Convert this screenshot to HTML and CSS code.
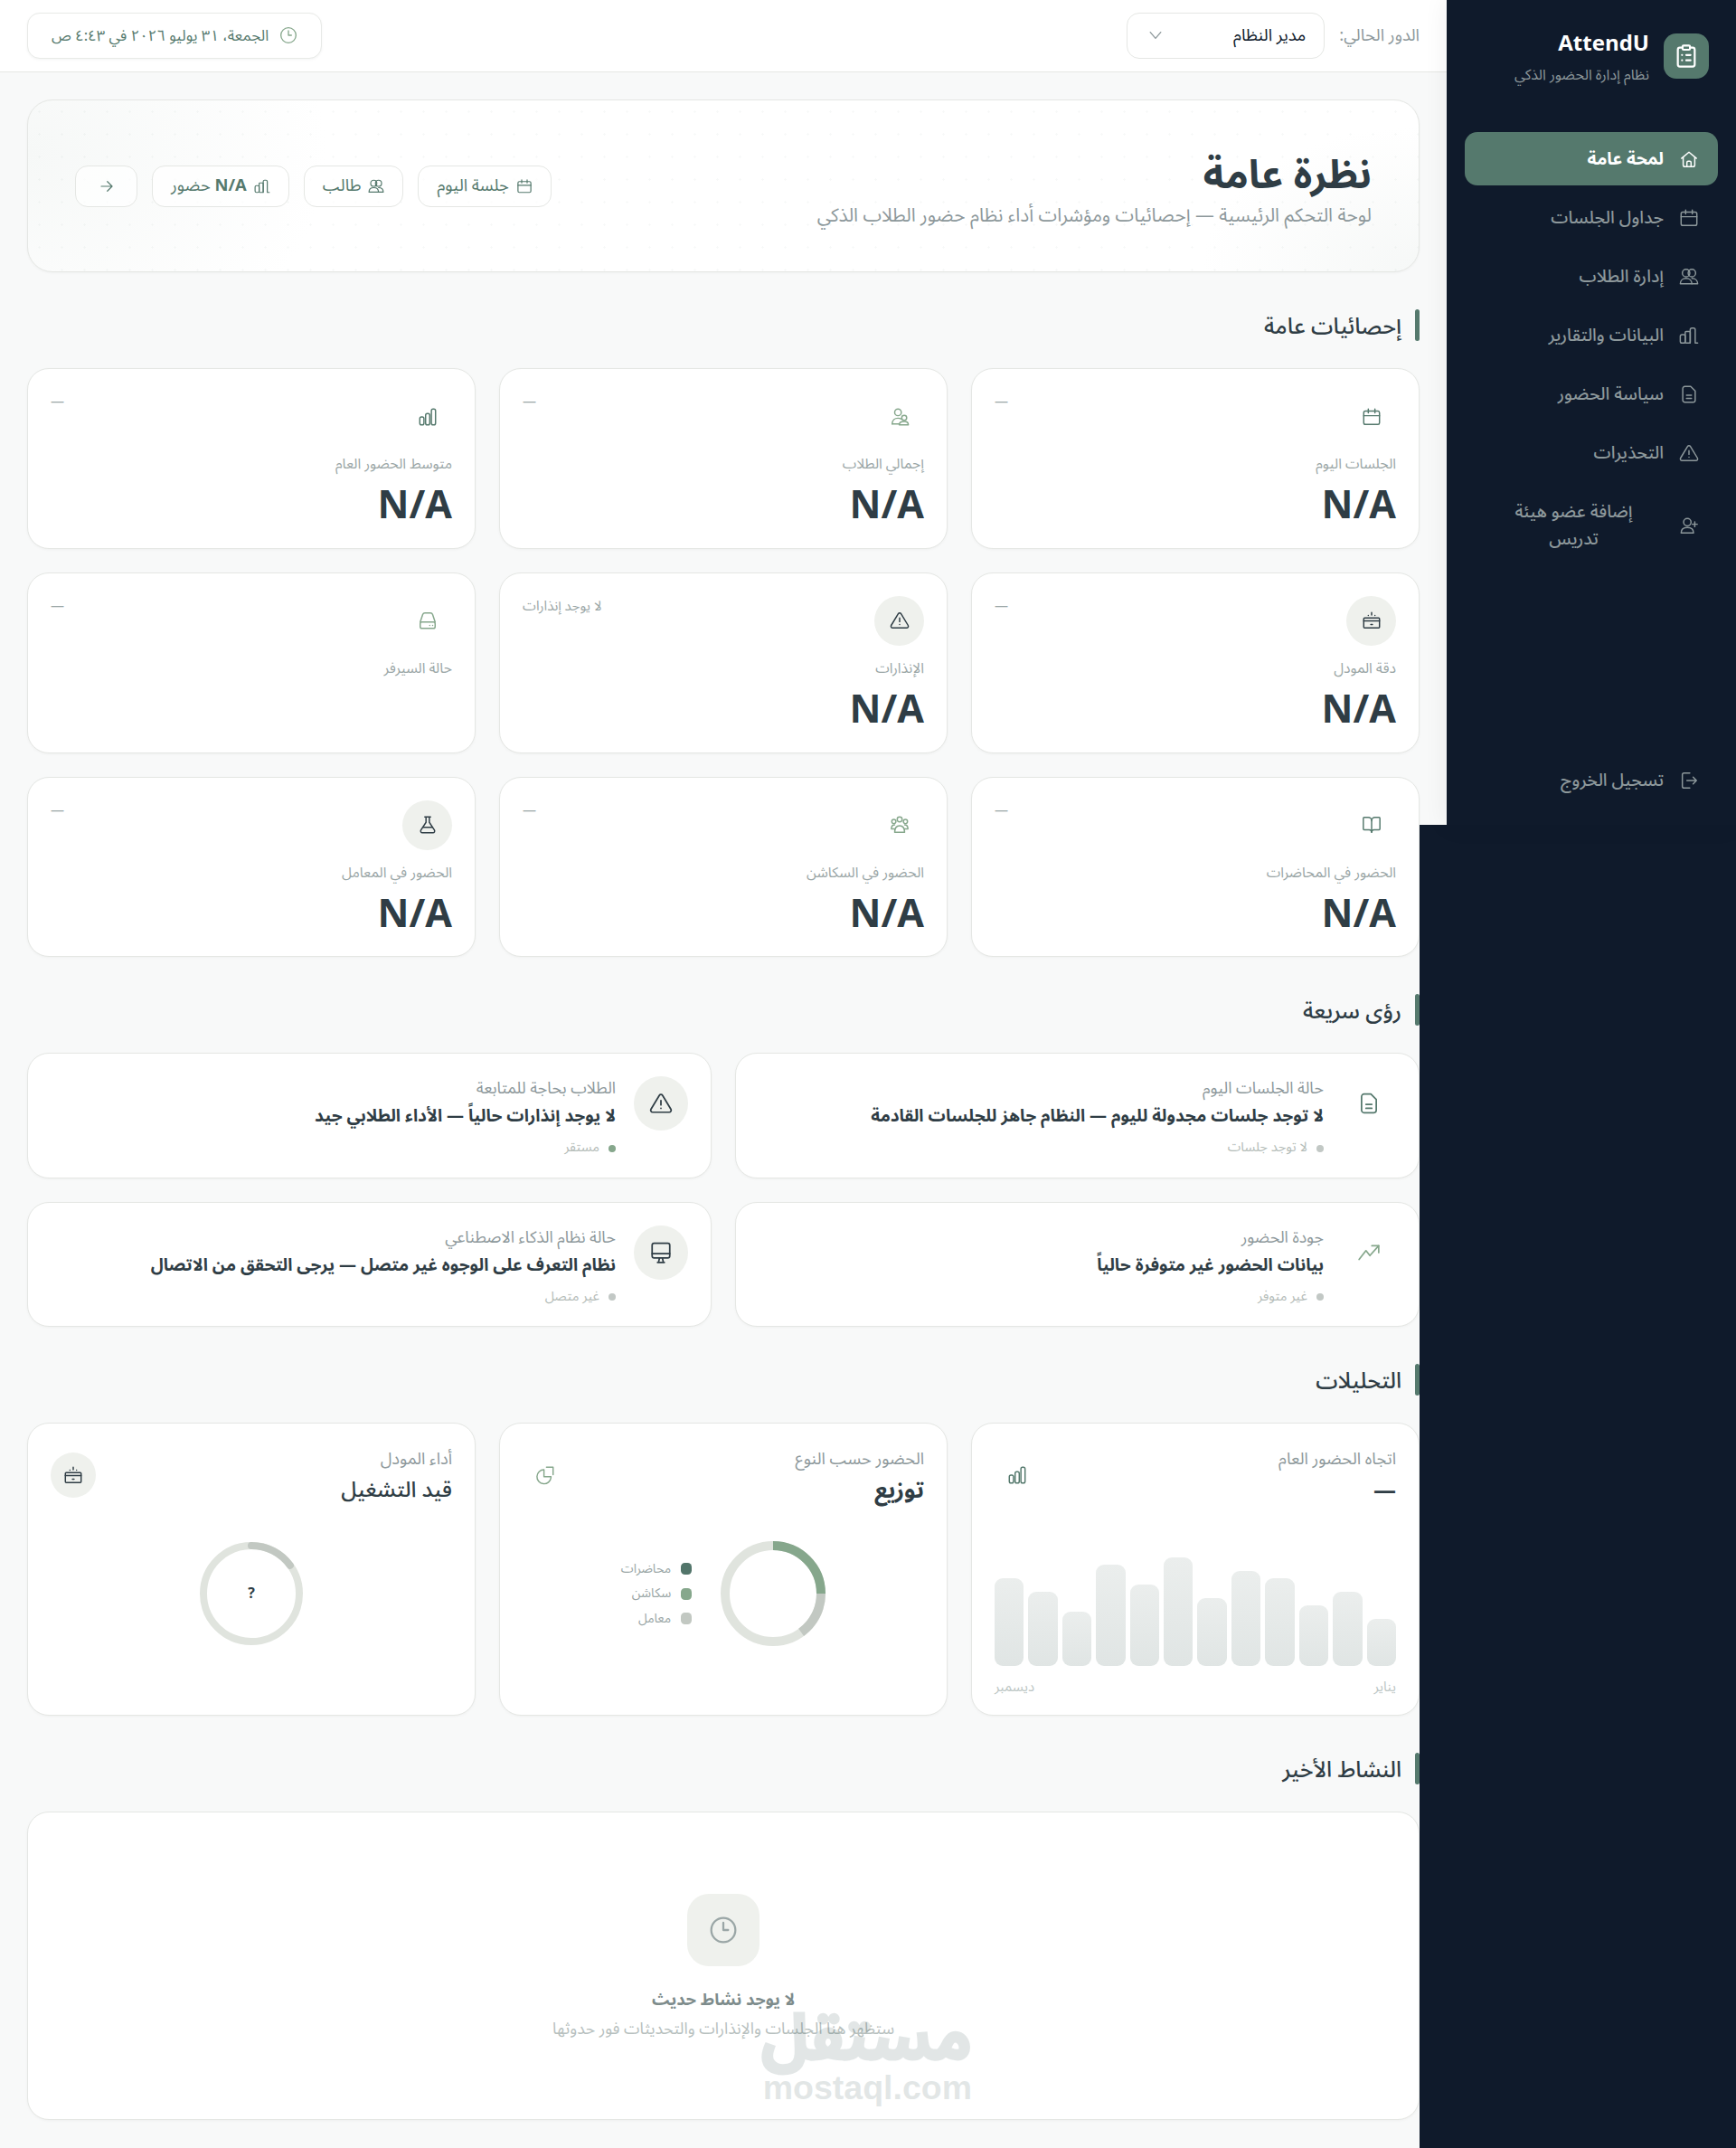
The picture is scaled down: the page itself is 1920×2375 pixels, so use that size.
FILE: index.html
```html
<!DOCTYPE html>
<html lang="ar" dir="rtl">
<head>
<meta charset="utf-8">
<title>AttendU</title>
<link rel="stylesheet" href="styles.css">
</head>
<body>
<svg class="defs" width="0" height="0" aria-hidden="true">
  <symbol id="i-home" viewBox="0 0 24 24"><path d="M3 11 12 3.500 21 11"/><path d="M5 9.500V19a2 2 0 0 0 2 2h10a2 2 0 0 0 2-2V9.500"/><path d="M9.500 21v-5a1.500 1.500 0 0 1 1.500-1.500h2a1.500 1.500 0 0 1 1.500 1.500v5"/></symbol>
  <symbol id="i-cal" viewBox="0 0 24 24"><rect x="2.500" y="5" width="19" height="16" rx="2"/><path d="M8 2.500V7M16 2.500V7M2.500 10.500h19"/></symbol>
  <symbol id="i-users" viewBox="0 0 24 24"><circle cx="8.500" cy="7.500" r="4.500"/><circle cx="15.500" cy="7.500" r="4.500"/><path d="M1.500 20.500c0-4 3-6.500 7-6.500s7 2.500 7 6.500z"/><path d="M15.500 14c4 0 7 2.500 7 6.500h-7"/></symbol>
  <symbol id="i-reports" viewBox="0 0 24 24"><rect x="1.500" y="11" width="6" height="10" rx="2"/><rect x="7.500" y="7" width="6" height="14" rx="1"/><path d="M13.500 21V5a2 2 0 0 1 2-2h2a2 2 0 0 1 2 2v16h3"/></symbol>
  <symbol id="i-file" viewBox="0 0 24 24"><path d="M14 2.500H7a2.500 2.500 0 0 0-2.500 2.500v14A2.500 2.500 0 0 0 7 21.500h10a2.500 2.500 0 0 0 2.500-2.500V8z"/><path d="M9 13h6M9 17h6"/></symbol>
  <symbol id="i-alert" viewBox="0 0 24 24"><path d="M10.300 3.900 1.800 18a2 2 0 0 0 1.700 3h17a2 2 0 0 0 1.700-3L13.700 3.900a2 2 0 0 0-3.400 0z"/><path d="M12 9v4.500M12 17h.01"/></symbol>
  <symbol id="i-useradd" viewBox="0 0 24 24"><circle cx="10" cy="8" r="4.500"/><path d="M2.500 21c0-4 3-6.500 7.500-6.500s7.500 2.500 7.500 6.500z"/><path d="M19 7.500v6M16 10.500h6"/></symbol>
  <symbol id="i-logout" viewBox="0 0 24 24"><path d="M13 3H6a2 2 0 0 0-2 2v14a2 2 0 0 0 2 2h7"/><path d="M9.500 12H21M17 8l4 4-4 4"/></symbol>
  <symbol id="i-clip" viewBox="0 0 24 24"><rect x="8.500" y="2" width="7" height="4" rx="1"/><path d="M15.500 4H18a2 2 0 0 1 2 2v14a2 2 0 0 1-2 2H6a2 2 0 0 1-2-2V6a2 2 0 0 1 2-2h2.500"/><path d="M12 11h4M12 16h4M8 11h.01M8 16h.01"/></symbol>
  <symbol id="i-clock" viewBox="0 0 24 24"><circle cx="12" cy="12" r="10"/><path d="M12 6v6h4"/></symbol>
  <symbol id="i-chev" viewBox="0 0 24 24"><path d="m5 8 7 8 7-8"/></symbol>
  <symbol id="i-arrow" viewBox="0 0 24 24"><path d="M4 12h16M13 5l7 7-7 7"/></symbol>
  <symbol id="i-bars" viewBox="0 0 24 24"><rect x="2.500" y="12" width="5" height="9.500" rx="2"/><rect x="9.500" y="8" width="5" height="13.500" rx="2"/><rect x="16.500" y="2.500" width="5" height="19" rx="2"/></symbol>
  <symbol id="i-people" viewBox="0 0 24 24"><circle cx="10" cy="6.500" r="4"/><circle cx="17.500" cy="13" r="3"/><path d="M3 20.500c0-4.500 3-7 7-7 1.500 0 3 .4 4.200 1.200"/><path d="M3 20.500h8"/><path d="M11.500 21.500c0-2.500 2.500-4 6-4s5 1.500 5 4z"/></symbol>
  <symbol id="i-bot" viewBox="0 0 24 24"><path d="M12 2.500v3M8 6h.01M16 6h.01"/><rect x="2.500" y="9" width="19" height="12" rx="1"/><path d="M2.500 12.500h19M11 17h2"/></symbol>
  <symbol id="i-server" viewBox="0 0 24 24"><path d="M3 14 6 5a3 3 0 0 1 3-2h6a3 3 0 0 1 3 2l3 9"/><rect x="3" y="14" width="18" height="7.500" rx="2"/><path d="M14.500 18h.01M18 18h.01"/></symbol>
  <symbol id="i-book" viewBox="0 0 24 24"><path d="M12 7v14"/><path d="M3 18a1 1 0 0 1-1-1V4a1 1 0 0 1 1-1h5a4 4 0 0 1 4 4 4 4 0 0 1 4-4h5a1 1 0 0 1 1 1v13a1 1 0 0 1-1 1h-6a3 3 0 0 0-3 3 3 3 0 0 0-3-3z"/></symbol>
  <symbol id="i-group" viewBox="0 0 24 24"><circle cx="12" cy="5.500" r="3"/><circle cx="5" cy="8" r="2.500"/><circle cx="19" cy="8" r="2.500"/><path d="M6 21c0-5 2-8 6-8s6 3 6 8z"/><path d="M6 17H2c0-3 1-5 4-5M18 17h4c0-3-1-5-4-5"/></symbol>
  <symbol id="i-flask" viewBox="0 0 24 24"><path d="M8.500 2.500h7M10 2.500V9L3.800 18.500A2 2 0 0 0 5.500 21.500h13a2 2 0 0 0 1.700-3L14 9V2.500"/><path d="M6.500 15h11"/></symbol>
  <symbol id="i-monitor" viewBox="0 0 24 24"><rect x="3" y="2.500" width="18" height="15" rx="2"/><path d="M3 13h18M8.500 22h7M10.500 17.500 9.500 22M13.500 17.500l1 4.500"/></symbol>
  <symbol id="i-trend" viewBox="0 0 24 24"><path d="m2 19 7-9 4 5 9-10"/><path d="M15 5h7v7"/></symbol>
  <symbol id="i-pie" viewBox="0 0 24 24"><path d="M13.500 2.500h8v9"/><path d="M19 15A8.500 8.500 0 1 1 10.500 5.500V14H19"/></symbol>
</svg>

<aside class="sidebar">
  <div class="brand">
    <div class="brand-logo"><svg class="ico ico-28"><use href="#i-clip"/></svg></div>
    <div class="brand-text">
      <div class="brand-name" dir="ltr">AttendU</div>
      <div class="brand-sub">نظام إدارة الحضور الذكي</div>
    </div>
  </div>
  <nav class="nav">
    <a class="nav-item nav-active"><svg class="ico ico-22"><use href="#i-home"/></svg><span>لمحة عامة</span></a>
    <a class="nav-item"><svg class="ico ico-22"><use href="#i-cal"/></svg><span>جداول الجلسات</span></a>
    <a class="nav-item"><svg class="ico ico-22"><use href="#i-users"/></svg><span>إدارة الطلاب</span></a>
    <a class="nav-item"><svg class="ico ico-22"><use href="#i-reports"/></svg><span>البيانات والتقارير</span></a>
    <a class="nav-item"><svg class="ico ico-22"><use href="#i-file"/></svg><span>سياسة الحضور</span></a>
    <a class="nav-item"><svg class="ico ico-22"><use href="#i-alert"/></svg><span>التحذيرات</span></a>
    <a class="nav-item nav-wrap"><svg class="ico ico-22"><use href="#i-useradd"/></svg><span>إضافة عضو هيئة تدريس</span></a>
  </nav>
  <a class="nav-item nav-logout"><svg class="ico ico-22"><use href="#i-logout"/></svg><span>تسجيل الخروج</span></a>
</aside>

<main class="main">
  <header class="topbar">
    <div class="role">
      <span class="role-label">الدور الحالي:</span>
      <div class="role-select"><span>مدير النظام</span><svg class="ico ico-20"><use href="#i-chev"/></svg></div>
    </div>
    <div class="date-pill"><svg class="ico ico-20"><use href="#i-clock"/></svg><span>الجمعة، ٣١ يوليو ٢٠٢٦ في ٤:٤٣ ص</span></div>
  </header>

  <div class="content">
    <section class="hero">
      <div class="hero-text">
        <h1>نظرة عامة</h1>
        <p>لوحة التحكم الرئيسية — إحصائيات ومؤشرات أداء نظام حضور الطلاب الذكي</p>
      </div>
      <div class="chips">
        <span class="chip"><svg class="ico ico-18"><use href="#i-cal"/></svg>جلسة اليوم</span>
        <span class="chip"><svg class="ico ico-18"><use href="#i-users"/></svg>طالب</span>
        <span class="chip"><svg class="ico ico-18"><use href="#i-reports"/></svg><span><b>N/A</b> حضور</span></span>
        <span class="chip chip-arrow"><svg class="ico ico-18"><use href="#i-arrow"/></svg></span>
      </div>
    </section>

    <h2 class="sec-title">إحصائيات عامة</h2>
    <section class="stats">
      <article class="stat">
        <div class="stat-top"><span class="stat-icon c-mid"><svg class="ico ico-22"><use href="#i-cal"/></svg></span><span class="trend">—</span></div>
        <div class="stat-label">الجلسات اليوم</div>
        <div class="stat-value" dir="ltr">N/A</div>
      </article>
      <article class="stat">
        <div class="stat-top"><span class="stat-icon c-light"><svg class="ico ico-22"><use href="#i-people"/></svg></span><span class="trend">—</span></div>
        <div class="stat-label">إجمالي الطلاب</div>
        <div class="stat-value" dir="ltr">N/A</div>
      </article>
      <article class="stat">
        <div class="stat-top"><span class="stat-icon c-mid"><svg class="ico ico-22"><use href="#i-bars"/></svg></span><span class="trend">—</span></div>
        <div class="stat-label">متوسط الحضور العام</div>
        <div class="stat-value" dir="ltr">N/A</div>
      </article>
      <article class="stat">
        <div class="stat-top"><span class="stat-icon c-dark is-filled"><svg class="ico ico-22"><use href="#i-bot"/></svg></span><span class="trend">—</span></div>
        <div class="stat-label">دقة المودل</div>
        <div class="stat-value" dir="ltr">N/A</div>
      </article>
      <article class="stat">
        <div class="stat-top"><span class="stat-icon c-dark is-filled"><svg class="ico ico-22"><use href="#i-alert"/></svg></span><span class="trend">لا يوجد إنذارات</span></div>
        <div class="stat-label">الإنذارات</div>
        <div class="stat-value" dir="ltr">N/A</div>
      </article>
      <article class="stat">
        <div class="stat-top"><span class="stat-icon c-light"><svg class="ico ico-22"><use href="#i-server"/></svg></span><span class="trend">—</span></div>
        <div class="stat-label">حالة السيرفر</div>
      </article>
      <article class="stat">
        <div class="stat-top"><span class="stat-icon c-mid"><svg class="ico ico-22"><use href="#i-book"/></svg></span><span class="trend">—</span></div>
        <div class="stat-label">الحضور في المحاضرات</div>
        <div class="stat-value" dir="ltr">N/A</div>
      </article>
      <article class="stat">
        <div class="stat-top"><span class="stat-icon c-light"><svg class="ico ico-22"><use href="#i-group"/></svg></span><span class="trend">—</span></div>
        <div class="stat-label">الحضور في السكاشن</div>
        <div class="stat-value" dir="ltr">N/A</div>
      </article>
      <article class="stat">
        <div class="stat-top"><span class="stat-icon c-dark is-filled"><svg class="ico ico-22"><use href="#i-flask"/></svg></span><span class="trend">—</span></div>
        <div class="stat-label">الحضور في المعامل</div>
        <div class="stat-value" dir="ltr">N/A</div>
      </article>
    </section>

    <h2 class="sec-title">رؤى سريعة</h2>
    <section class="insights">
      <article class="insight">
        <span class="insight-icon c-mid"><svg class="ico ico-26"><use href="#i-file"/></svg></span>
        <div class="insight-body">
          <div class="insight-label">حالة الجلسات اليوم</div>
          <div class="insight-title">لا توجد جلسات مجدولة لليوم — النظام جاهز للجلسات القادمة</div>
          <div class="insight-status"><i class="dot"></i>لا توجد جلسات</div>
        </div>
      </article>
      <article class="insight">
        <span class="insight-icon c-dark is-filled"><svg class="ico ico-26"><use href="#i-alert"/></svg></span>
        <div class="insight-body">
          <div class="insight-label">الطلاب بحاجة للمتابعة</div>
          <div class="insight-title">لا يوجد إنذارات حالياً — الأداء الطلابي جيد</div>
          <div class="insight-status"><i class="dot dot-ok"></i>مستقر</div>
        </div>
      </article>
      <article class="insight">
        <span class="insight-icon c-light"><svg class="ico ico-26"><use href="#i-trend"/></svg></span>
        <div class="insight-body">
          <div class="insight-label">جودة الحضور</div>
          <div class="insight-title">بيانات الحضور غير متوفرة حالياً</div>
          <div class="insight-status"><i class="dot"></i>غير متوفر</div>
        </div>
      </article>
      <article class="insight">
        <span class="insight-icon c-dark is-filled"><svg class="ico ico-26"><use href="#i-monitor"/></svg></span>
        <div class="insight-body">
          <div class="insight-label">حالة نظام الذكاء الاصطناعي</div>
          <div class="insight-title">نظام التعرف على الوجوه غير متصل — يرجى التحقق من الاتصال</div>
          <div class="insight-status"><i class="dot"></i>غير متصل</div>
        </div>
      </article>
    </section>

    <h2 class="sec-title">التحليلات</h2>
    <section class="analytics">
      <article class="panel">
        <div class="panel-head">
          <div><div class="panel-label">اتجاه الحضور العام</div><div class="panel-value">—</div></div>
          <span class="panel-icon c-mid"><svg class="ico ico-22"><use href="#i-bars"/></svg></span>
        </div>
        <div class="bars">
          <i style="height:35%"></i><i style="height:55%"></i><i style="height:45%"></i><i style="height:65%"></i><i style="height:70%"></i><i style="height:50%"></i><i style="height:80%"></i><i style="height:60%"></i><i style="height:75%"></i><i style="height:40%"></i><i style="height:55%"></i><i style="height:65%"></i>
        </div>
        <div class="bars-axis"><span>يناير</span><span>ديسمبر</span></div>
      </article>
      <article class="panel">
        <div class="panel-head">
          <div><div class="panel-label">الحضور حسب النوع</div><div class="panel-value">توزيع</div></div>
          <span class="panel-icon c-light"><svg class="ico ico-22"><use href="#i-pie"/></svg></span>
        </div>
        <div class="donut-wrap">
          <svg class="donut" viewBox="0 0 116 116" width="116" height="116">
            <circle class="ring-track" cx="58" cy="58" r="53"/>
            <circle class="ring-a" cx="58" cy="58" r="53" pathLength="100" stroke-dasharray="25 75"/>
            <circle class="ring-b" cx="58" cy="58" r="53" pathLength="100" stroke-dasharray="15 85" stroke-dashoffset="-25"/>
          </svg>
          <ul class="legend">
            <li><i class="lg lg-1"></i>محاضرات</li>
            <li><i class="lg lg-2"></i>سكاشن</li>
            <li><i class="lg lg-3"></i>معامل</li>
          </ul>
        </div>
      </article>
      <article class="panel">
        <div class="panel-head">
          <div><div class="panel-label">أداء المودل</div><div class="panel-value panel-value-soft">قيد التشغيل</div></div>
          <span class="panel-icon c-dark is-filled"><svg class="ico ico-22"><use href="#i-bot"/></svg></span>
        </div>
        <div class="gauge-wrap">
          <div class="gauge">
            <svg viewBox="0 0 114 114" width="114" height="114">
              <circle class="gauge-track" cx="57" cy="57" r="53"/>
              <circle class="gauge-fill" cx="57" cy="57" r="53" pathLength="100" stroke-dasharray="15 85"/>
            </svg>
            <span class="gauge-text">?</span>
          </div>
        </div>
      </article>
    </section>

    <h2 class="sec-title">النشاط الأخير</h2>
    <section class="activity">
      <div class="activity-icon"><svg class="ico ico-32"><use href="#i-clock"/></svg></div>
      <div class="activity-title">لا يوجد نشاط حديث</div>
      <div class="activity-sub">ستظهر هنا الجلسات والإنذارات والتحديثات فور حدوثها</div>
    </section>
  </div>
</main>

<div class="watermark" aria-hidden="true"><div class="wm-ar">مستقل</div><div class="wm-en">mostaql.com</div></div>
</body>
</html>
```
FILE: styles.css
```css
* { box-sizing: border-box; }
html, body { margin: 0; padding: 0; }
body {
  width: 1920px;
  height: 2375px;
  position: relative;
  display: flex;
  align-items: flex-start;
  background: #0f1a2b;
  color: #2f3d45;
  font-family: "Noto Sans Arabic", "Noto Sans", sans-serif;
  overflow: hidden;
}
.defs { position: absolute; }
.ico { display: block; fill: none; stroke: currentColor; stroke-width: 1.6; stroke-linecap: round; stroke-linejoin: round; flex: none; }
.ico-18 { width: 18px; height: 18px; }
.ico-20 { width: 20px; height: 20px; }
.ico-22 { width: 22px; height: 22px; }
.ico-26 { width: 26px; height: 26px; }
.ico-28 { width: 28px; height: 28px; stroke-width: 1.9; }
.ico-32 { width: 32px; height: 32px; stroke-width: 1.7; }

/* sidebar */
.sidebar {
  width: 320px;
  height: 912px;
  flex: none;
  display: flex;
  flex-direction: column;
  padding: 31px 20px 20px;
  background: #0f1a2b;
  position: relative;
  z-index: 2;
  box-shadow: 0 0 26px rgba(15, 26, 43, .07);
}
.brand { display: flex; align-items: center; gap: 16px; padding-right: 10px; height: 62px; }
.brand-logo { width: 50px; height: 50px; border-radius: 14px; background: #55796d; color: #fff; display: flex; align-items: center; justify-content: center; }
.brand-name { color: #fff; font-size: 24px; font-weight: 700; line-height: 36px; text-align: right; }
.brand-sub { color: #8d989b; font-size: 16px; line-height: 20px; margin-top: 6px; }
.nav { display: flex; flex-direction: column; gap: 6px; margin-top: 53px; }
.nav-item {
  display: flex;
  align-items: center;
  gap: 17px;
  padding: 14.500px 21px;
  color: #8d989b;
  font-size: 19.200px;
  font-weight: 500;
  line-height: 30px;
  border-radius: 14px;
}
.nav-item span { flex: 1; }
.nav-active { background: #55796d; color: #fff; font-weight: 700; }
.nav-wrap span { text-align: center; padding: 0 18px; }
.nav-logout { margin-top: auto; }

/* main */
.main {
  width: 1600px;
  height: 912px;
  flex: none;
  background: #f8f9f9;
}
.topbar {
  height: 80px;
  display: flex;
  align-items: center;
  justify-content: space-between;
  padding: 0 30px 1px;
  background: #fff;
  border-bottom: 1px solid #e5e7e4;
}
.role { display: flex; align-items: center; gap: 16px; }
.role-label { color: #8d989b; font-size: 18.500px; }
.role-select {
  width: 219px;
  height: 51px;
  display: flex;
  align-items: center;
  justify-content: space-between;
  padding: 0 20px 0 21px;
  background: #fff;
  border: 1px solid #e5e7e4;
  border-radius: 14px;
  color: #0f1a2b;
  font-size: 18.500px;
}
.role-select .ico { color: #8d989b; }
.date-pill {
  height: 51px;
  display: flex;
  align-items: center;
  gap: 12px;
  padding: 0 26px;
  background: #fff;
  border: 1px solid #e8eae7;
  border-radius: 14px;
  box-shadow: 0 1px 3px rgba(20, 30, 30, .05);
  color: #55796d;
  font-size: 16.700px;
}
.date-pill .ico { color: #86a78c; }

.content {
  width: 1570px;
  min-height: 2295px;
  margin-right: 30px;
  padding: 30px 0 31px 30px;
  background: #f8f9f9;
  position: relative;
}

/* hero */
.hero {
  height: 191px;
  display: flex;
  align-items: center;
  justify-content: space-between;
  padding: 0 52px;
  border: 1px solid #e5e7e4;
  border-radius: 28px;
  box-shadow: 0 1px 3px rgba(20, 30, 30, .04);
  background-color: #fff;
  background-image:
    radial-gradient(rgba(85, 121, 109, .045) 1px, transparent 1.2px),
    radial-gradient(ellipse 330px 260px at 0 30%, #f6f8f7, transparent),
    radial-gradient(ellipse 240px 160px at 100% 100%, #f6f8f7, transparent);
  background-size: 25px 25px, auto, auto;
}
.hero-text { margin-top: 3px; }
.hero h1 { margin: 0; font-size: 44px; line-height: 62px; font-weight: 700; color: #2f3d45; }
.hero p { margin: 0; font-size: 20.800px; line-height: 27px; color: #8d989b; }
.chips { display: flex; gap: 16px; }
.chip {
  height: 46px;
  display: flex;
  align-items: center;
  gap: 8px;
  padding: 0 20px;
  background: rgba(255, 255, 255, .7);
  border: 1px solid #e5e7e4;
  border-radius: 14px;
  color: #55796d;
  font-size: 18.400px;
}
.chip b { font-weight: 700; }
.chip-arrow { width: 69px; justify-content: center; padding: 0; }

/* section title */
.sec-title {
  height: 35px;
  margin: 41px 0 30px;
  padding-right: 20px;
  font-size: 24.500px;
  font-weight: 500;
  line-height: 39px;
  color: #2f3d45;
  position: relative;
}
.sec-title::before {
  content: "";
  position: absolute;
  right: 0;
  top: 0;
  width: 5px;
  height: 35px;
  border-radius: 3px;
  background: #55796d;
}

/* stats */
.stats { display: grid; grid-template-columns: repeat(3, 1fr); gap: 26px; }
.stat {
  padding: 25px 25px 18px;
  background: #fff;
  border: 1px solid #e5e7e4;
  border-radius: 24px;
  box-shadow: 0 1px 3px rgba(20, 30, 30, .04);
}
.stat-top { display: flex; justify-content: space-between; align-items: flex-start; height: 55px; }
.stat-icon { width: 55px; height: 55px; border-radius: 50%; display: flex; align-items: center; justify-content: center; }
.is-filled { background: #eff1ed; }
.c-dark { color: #2f3d45; }
.c-mid { color: #55796d; }
.c-light { color: #86a78c; }
.trend { color: #9aa6a6; font-size: 15px; line-height: 22px; }
.stat-label { margin-top: 15px; font-size: 15.700px; line-height: 20px; color: #9aa6a6; }
.stat-value { margin-top: 9px; font-size: 43px; font-weight: 700; line-height: 55.800px; text-align: right; color: #2f3d45; }

/* insights */
.insights { display: grid; grid-template-columns: repeat(2, 1fr); gap: 26px; }
.insight {
  display: flex;
  gap: 20px;
  padding: 25px 25px 22px;
  background: #fff;
  border: 1px solid #e5e7e4;
  border-radius: 24px;
  box-shadow: 0 1px 3px rgba(20, 30, 30, .04);
}
.insight-icon { width: 60px; height: 60px; border-radius: 50%; flex: none; display: flex; align-items: center; justify-content: center; }
.insight-label { font-size: 17.800px; line-height: 28px; color: #8d989b; }
.insight-title { margin-top: 1px; font-size: 19px; font-weight: 700; line-height: 30px; color: #2f3d45; }
.insight-status { margin-top: 10px; display: flex; align-items: center; gap: 10px; font-size: 14.700px; line-height: 20.500px; color: #b4bcb8; }
.dot { width: 8px; height: 8px; border-radius: 50%; background: #c2c8c5; }
.dot-ok { background: #86a78c; }

/* analytics */
.analytics { display: grid; grid-template-columns: repeat(3, 1fr); gap: 26px; }
.panel {
  height: 324px;
  padding: 26px 25px 0;
  background: #fff;
  border: 1px solid #e5e7e4;
  border-radius: 24px;
  box-shadow: 0 1px 3px rgba(20, 30, 30, .04);
}
.panel-head { display: flex; justify-content: space-between; align-items: flex-start; height: 70px; }
.panel-label { font-size: 18.300px; line-height: 26px; color: #8d989b; }
.panel-value { font-size: 25px; font-weight: 700; line-height: 44px; color: #2f3d45; }
.panel-value-soft { font-weight: 500; font-size: 24px; }
.panel-icon { margin-top: 6px; width: 50px; height: 50px; border-radius: 50%; display: flex; align-items: center; justify-content: center; }
.bars { margin-top: 22px; height: 150px; display: flex; align-items: flex-end; gap: 5px; }
.bars i { flex: 1; border-radius: 9px; background: linear-gradient(#ebeeed, #e0e5e4); }
.bars-axis { margin-top: 13px; display: flex; justify-content: space-between; font-size: 15px; line-height: 20px; color: #bcc6c4; }
.donut-wrap { margin-top: 34px; display: flex; align-items: center; justify-content: center; gap: 32px; }
.donut { transform: rotate(-90deg); display: block; }
.donut circle { fill: none; stroke-width: 10; }
.ring-track { stroke: #e0e4de; }
.ring-a { stroke: #86a78c; }
.ring-b { stroke: #c2c8c2; }
.legend { list-style: none; margin: 0; padding: 0; display: flex; flex-direction: column; gap: 7.500px; font-size: 14px; line-height: 20px; color: #9aa6a6; }
.legend li { display: flex; align-items: center; gap: 11px; }
.lg { width: 12px; height: 13px; border-radius: 4.500px; }
.lg-1 { background: #52756a; }
.lg-2 { background: #86a78c; }
.lg-3 { background: #c2c8c2; }
.gauge-wrap { margin-top: 35px; display: flex; justify-content: center; }
.gauge { position: relative; width: 114px; height: 114px; }
.gauge svg { display: block; transform: rotate(-90deg); }
.gauge circle { fill: none; stroke-width: 8; }
.gauge-track { stroke: #e0e4de; }
.gauge-fill { stroke: #c2c8c2; stroke-linecap: round; }
.gauge-text { position: absolute; inset: 0; display: flex; align-items: center; justify-content: center; font-size: 16px; font-weight: 700; color: #2f3d45; }

/* activity */
.activity {
  height: 341px;
  display: flex;
  flex-direction: column;
  align-items: center;
  padding-top: 90px;
  background: #fff;
  border: 1px solid #e5e7e4;
  border-radius: 24px;
  box-shadow: 0 1px 3px rgba(20, 30, 30, .04);
}
.activity-icon { width: 80px; height: 80px; border-radius: 24px; background: #eff1ed; color: #9aa6a6; display: flex; align-items: center; justify-content: center; }
.activity-title { margin-top: 22px; font-size: 18.200px; font-weight: 700; line-height: 30px; color: #7e8c8c; }
.activity-sub { margin-top: 5px; font-size: 17.700px; line-height: 26px; color: #b7c0be; }

/* watermark */
.watermark {
  position: absolute;
  left: 845px;
  top: 2222px;
  width: 230px;
  color: #002a2a;
  opacity: .11;
  text-align: center;
  pointer-events: none;
  z-index: 5;
}
.wm-ar { font-size: 70px; font-weight: 700; line-height: 66px; -webkit-text-stroke: 3px #002a2a; }
.wm-en { font-family: "Liberation Sans", sans-serif; font-size: 37.500px; font-weight: 700; line-height: 40px; margin-top: 0; }
```
